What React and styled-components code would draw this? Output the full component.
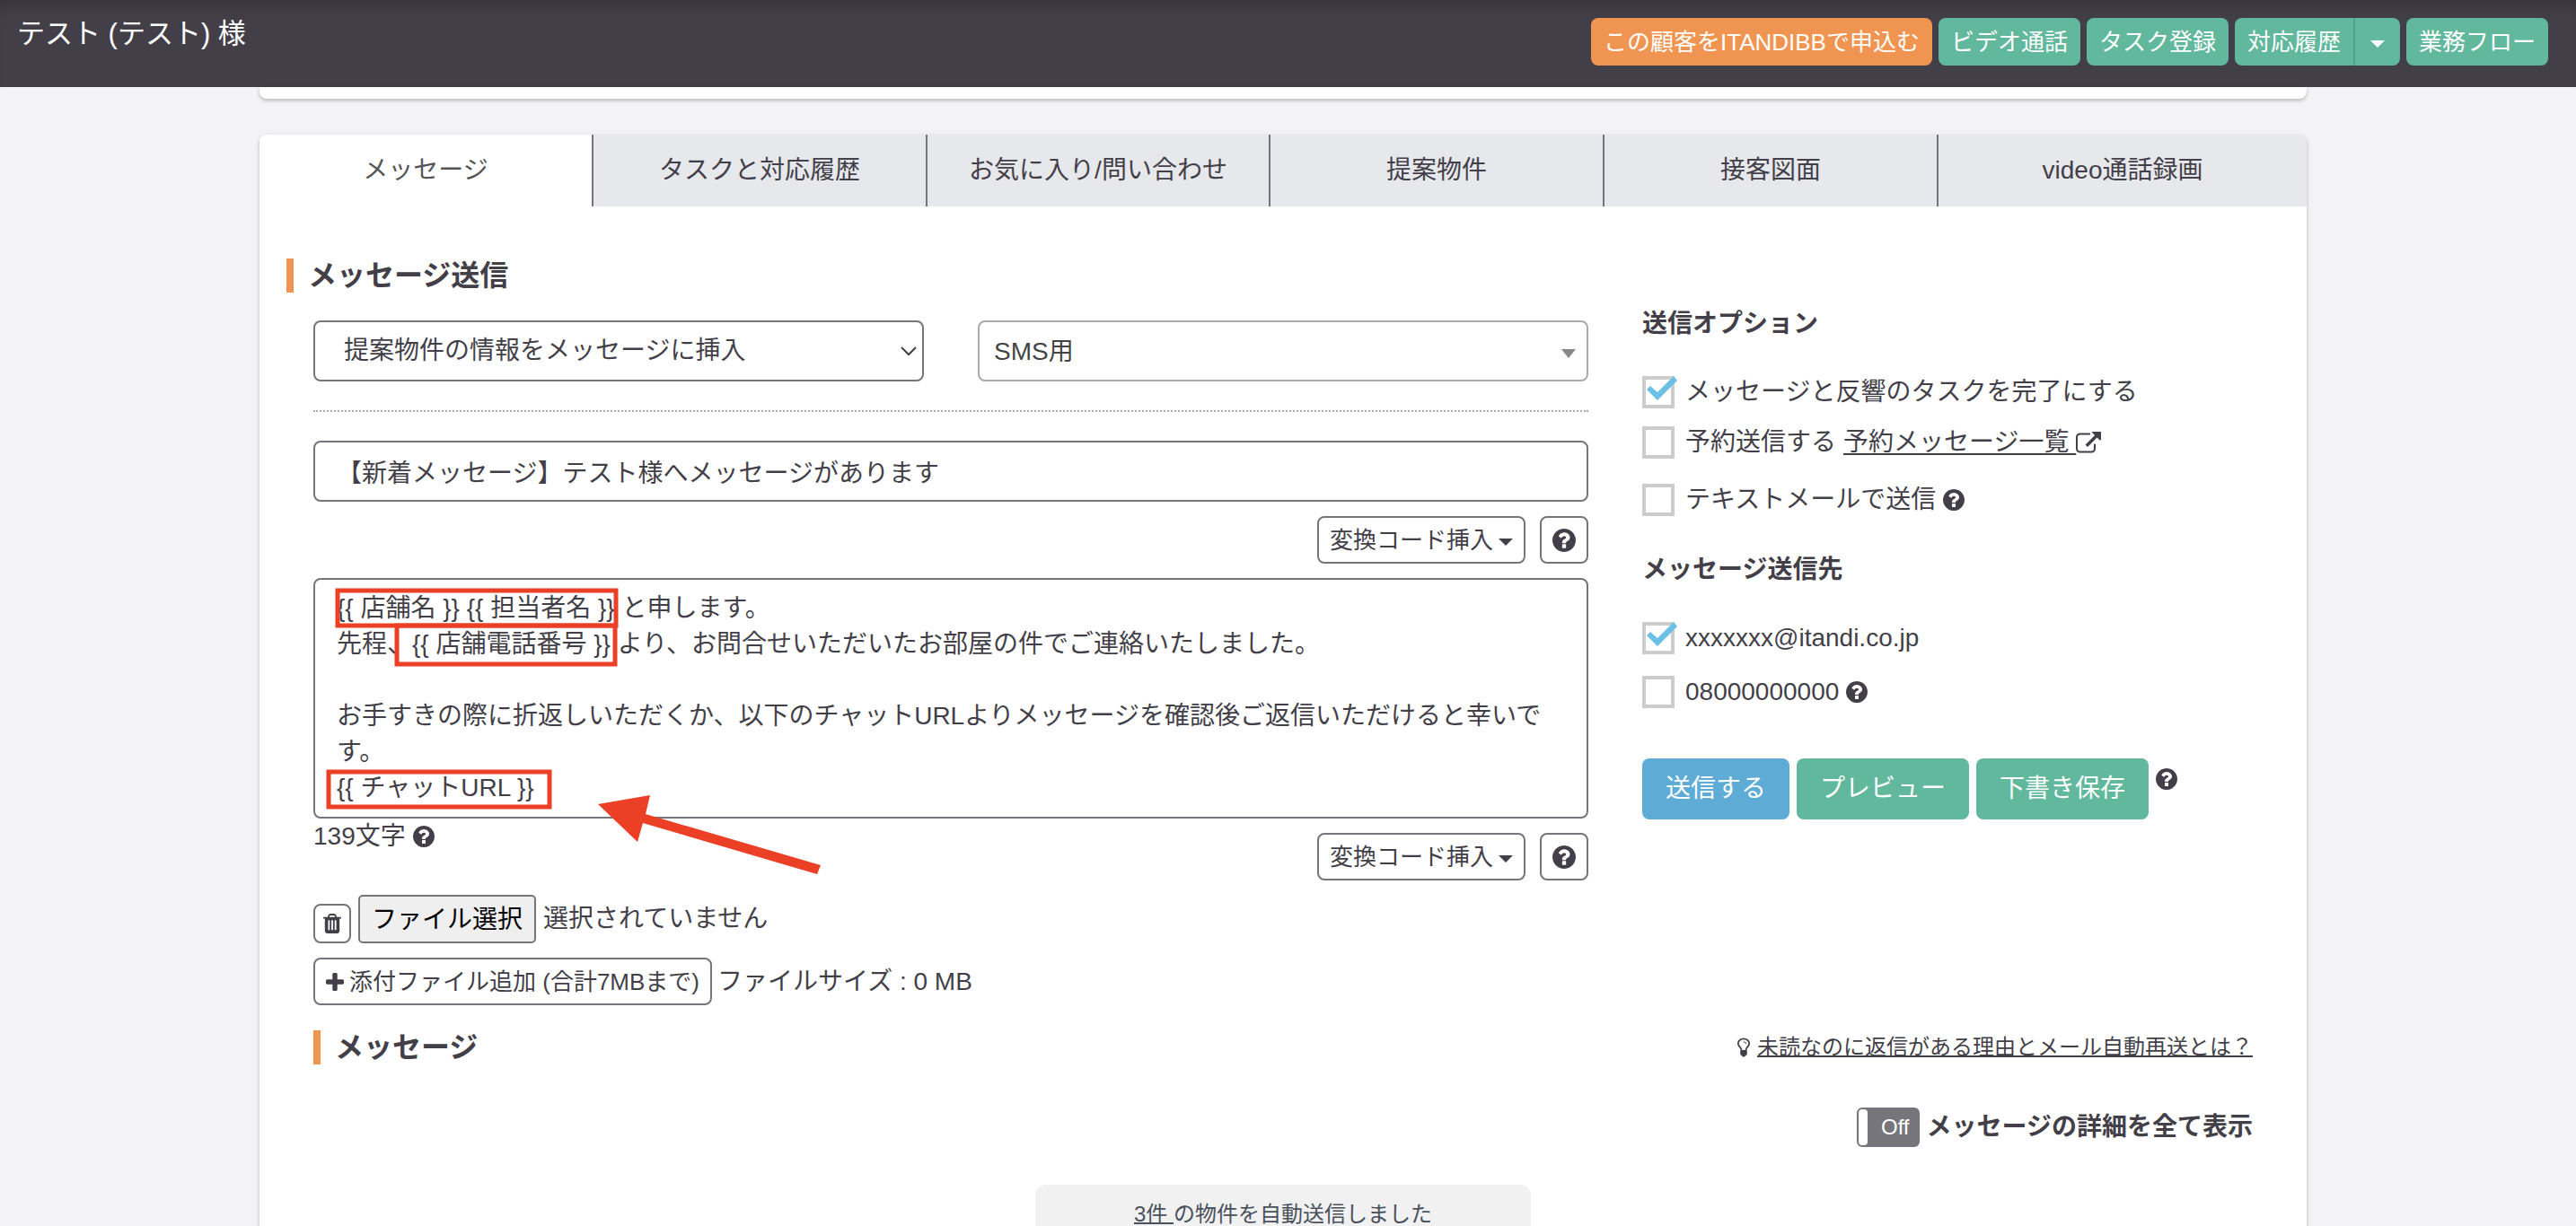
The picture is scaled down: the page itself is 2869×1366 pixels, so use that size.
import React, { useState } from 'react';
import styled, { createGlobalStyle, css } from 'styled-components';

const initialBody = `{{ 店舗名 }} {{ 担当者名 }} と申します。
先程、{{ 店舗電話番号 }} より、お問合せいただいたお部屋の件でご連絡いたしました。

お手すきの際に折返しいただくか、以下のチャットURLよりメッセージを確認後ご返信いただけると幸いです。
{{ チャットURL }}`;

const tabs = [
  'メッセージ',
  'タスクと対応履歴',
  'お気に入り/問い合わせ',
  '提案物件',
  '接客図面',
  'video通話録画',
];

const HelpIcon = ({ size = 24 }) => (
  <Icon width={size} height={size} viewBox="128 128 1536 1536" aria-hidden="true">
    <path d="M1024 1376v-192q0-14-9-23t-23-9h-192q-14 0-23 9t-9 23v192q0 14 9 23t23 9h192q14 0 23-9t9-23zm256-672q0-88-55.5-163t-138.5-116-170-41q-243 0-371 213-15 24 8 42l132 100q7 6 19 6 16 0 25-12 53-68 86-92 34-24 86-24 48 0 85.5 26t37.5 59q0 38-20 61t-68 45q-63 28-115.5 86.5t-52.5 125.5v36q0 14 9 23t23 9h192q14 0 23-9t9-23q0-19 21.5-49.5t54.5-49.5q32-18 49-28.5t46-35 44.5-48 28-60.5 12.5-81zm384 192q0 209-103 385.5t-279.5 279.5-385.5 103-385.5-103-279.5-279.5-103-385.5 103-385.5 279.5-279.5 385.5-103 385.5 103 279.5 279.5 103 385.5z" />
  </Icon>
);

const ExternalLinkIcon = () => (
  <Icon width="28" height="24" viewBox="0 32 1792 1536" aria-hidden="true">
    <path d="M1408 928v320q0 119-84.5 203.5t-203.5 84.5h-832q-119 0-203.5-84.5t-84.5-203.5v-832q0-119 84.5-203.5t203.5-84.5h704q14 0 23 9t9 23v64q0 14-9 23t-23 9h-704q-66 0-113 47t-47 113v832q0 66 47 113t113 47h832q66 0 113-47t47-113v-320q0-14 9-23t23-9h64q14 0 23 9t9 23zm384-864v512q0 26-19 45t-45 19-45-19l-176-176-652 652q-10 10-23 10t-23-10l-114-114q-10-10-10-23t10-23l652-652-176-176q-19-19-19-45t19-45 45-19h512q26 0 45 19t19 45z" />
  </Icon>
);

const TrashIcon = () => (
  <Icon width="20" height="22" viewBox="192 128 1408 1536" aria-hidden="true">
    <path d="M704 1376v-704q0-14-9-23t-23-9h-64q-14 0-23 9t-9 23v704q0 14 9 23t23 9h64q14 0 23-9t9-23zm256 0v-704q0-14-9-23t-23-9h-64q-14 0-23 9t-9 23v704q0 14 9 23t23 9h64q14 0 23-9t9-23zm256 0v-704q0-14-9-23t-23-9h-64q-14 0-23 9t-9 23v704q0 14 9 23t23 9h64q14 0 23-9t9-23zm-544-992h448l-48-117q-7-9-17-11h-317q-10 2-17 11zm928 32v64q0 14-9 23t-23 9h-96v948q0 83-47 143.5t-113 60.5h-832q-66 0-113-58.5t-47-141.5v-952h-96q-14 0-23-9t-9-23v-64q0-14 9-23t23-9h309l70-167q15-37 54-63t79-26h320q40 0 79 26t54 63l70 167h309q14 0 23 9t9 23z" />
  </Icon>
);

const PlusIcon = () => (
  <Icon width="20" height="20" viewBox="192 128 1408 1408" aria-hidden="true">
    <path d="M1600 736v192q0 40-28 68t-68 28h-416v416q0 40-28 68t-68 28h-192q-40 0-68-28t-28-68v-416h-416q-40 0-68-28t-28-68v-192q0-40 28-68t68-28h416v-416q0-40 28-68t68-28h192q40 0 68 28t28 68v416h416q40 0 68 28t28 68z" />
  </Icon>
);

const BulbIcon = () => (
  <Icon width="14" height="22" viewBox="384 128 1024 1536" aria-hidden="true">
    <path d="M1120 576q0 13-9.5 22.5t-22.5 9.5-22.5-9.5-9.5-22.5q0-46-54-71t-106-25q-13 0-22.5-9.5t-9.5-22.5 9.5-22.5 22.5-9.5q50 0 99.5 16t87 54 37.5 90zm160 0q0-72-34.5-134t-90-101.5-123-62-136.5-22.5-136.5 22.5-123 62-90 101.5-34.5 134q0 101 68 180 10 11 30.5 33t30.5 33q128 153 141 298h228q13-145 141-298 10-11 30.5-33t30.5-33q68-79 68-180zm128 0q0 155-103 268-45 49-74.5 87t-59.5 95.5-34 107.5q47 28 47 82 0 37-25 64 25 27 25 64 0 52-45 81 13 23 13 47 0 46-31.5 71t-77.5 25q-20 44-60 70t-87 26-87-26-60-70q-46 0-77.5-25t-31.5-71q0-24 13-47-45-29-45-81 0-37 25-64-25-27-25-64 0-54 47-82-4-50-34-107.5t-59.5-95.5-74.5-87q-103-113-103-268 0-99 44.5-184.5t117-142 164-89 186.5-32.5 186.5 32.5 164 89 117 142 44.5 184.5z" />
  </Icon>
);

const InsertCodeButtons = () => (
  <ButtonRow>
    <OutlineButton type="button">
      変換コード挿入
      <Caret />
    </OutlineButton>
    <OutlineButton type="button" aria-label="ヘルプ">
      <HelpIcon size={26} />
    </OutlineButton>
  </ButtonRow>
);

const CheckOption = ({ id, label, defaultChecked, tall, children }) => (
  <Option $tall={tall}>
    <CheckWrap>
      <CheckInput id={id} type="checkbox" defaultChecked={defaultChecked} />
      <CheckMark width="40" height="36" viewBox="0 0 40 36" aria-hidden="true">
        <polygon points="5,15 9,11 17,18 35,0 39,5 17,27" />
      </CheckMark>
    </CheckWrap>
    <OptionText>
      <label htmlFor={id}>{label}</label>
      {children}
    </OptionText>
  </Option>
);

const App = () => {
  const [subject, setSubject] = useState('【新着メッセージ】テスト様へメッセージがあります');
  const [body, setBody] = useState(initialBody);
  const [showDetail, setShowDetail] = useState(false);

  return (
    <>
      <GlobalStyle />
      <Page>
        <Header>
          <CustomerName>テスト (テスト) 様</CustomerName>
          <HeaderActions>
            <SolidButton type="button" $color="#f09551">この顧客をITANDIBBで申込む</SolidButton>
            <SolidButton type="button">ビデオ通話</SolidButton>
            <SolidButton type="button">タスク登録</SolidButton>
            <ButtonGroup>
              <SolidButton type="button">対応履歴</SolidButton>
              <DropdownToggle type="button" aria-label="対応履歴メニュー">
                <Caret />
              </DropdownToggle>
            </ButtonGroup>
            <SolidButton type="button">業務フロー</SolidButton>
          </HeaderActions>
        </Header>

        <Main>
          <Container>
            <PreviousCard />
            <Card>
              <Tabs role="tablist">
                {tabs.map((tab, i) => (
                  <Tab key={tab} type="button" role="tab" aria-selected={i === 0} $active={i === 0}>
                    {tab}
                  </Tab>
                ))}
              </Tabs>

              <CardBody>
                <SectionTitle $outdent>メッセージ送信</SectionTitle>
                <Columns>
                  <Form>
                    <SelectRow>
                      <SelectWrap>
                        <Select aria-label="提案物件の挿入">
                          <option>提案物件の情報をメッセージに挿入</option>
                        </Select>
                        <Chevron width="18" height="11" viewBox="0 0 18 11" aria-hidden="true">
                          <path d="M1 1l8 8 8-8" />
                        </Chevron>
                      </SelectWrap>
                      <SelectWrap>
                        <Select aria-label="テンプレート" $template>
                          <option>SMS用</option>
                        </Select>
                        <SelectArrow />
                      </SelectWrap>
                    </SelectRow>
                    <Divider />
                    <SubjectInput
                      type="text"
                      aria-label="件名"
                      value={subject}
                      onChange={e => setSubject(e.target.value)}
                    />
                    <InsertRow>
                      <InsertCodeButtons />
                    </InsertRow>
                    <BodyWrap>
                      <BodyInput
                        aria-label="本文"
                        rows={6}
                        spellCheck={false}
                        value={body}
                        onChange={e => setBody(e.target.value)}
                      />
                      <Marks width="600" height="340" viewBox="0 0 600 340" aria-hidden="true">
                        <rect x="27" y="14" width="310" height="39" />
                        <rect x="93" y="53" width="243" height="43" />
                        <rect x="17" y="216" width="246" height="39" />
                        <polygon points="317,252 375,242 370,263 565,320 561,330 367,273 361,294" />
                      </Marks>
                    </BodyWrap>
                    <CountRow>
                      <CharCount>
                        139文字 <HelpIcon />
                      </CharCount>
                      <InsertCodeSlot>
                        <InsertCodeButtons />
                      </InsertCodeSlot>
                    </CountRow>
                    <FileRow>
                      <TrashButton type="button" aria-label="削除">
                        <TrashIcon />
                      </TrashButton>
                      <FileInput id="attachment" type="file" />
                      <FileLabel htmlFor="attachment">ファイル選択</FileLabel>
                      <FileStatus>選択されていません</FileStatus>
                    </FileRow>
                    <AttachRow>
                      <OutlineButton type="button">
                        <PlusIcon />
                        添付ファイル追加 (合計7MBまで)
                      </OutlineButton>
                      <span>ファイルサイズ : 0 MB</span>
                    </AttachRow>
                  </Form>

                  <Side>
                    <SideTitle>送信オプション</SideTitle>
                    <Options>
                      <CheckOption id="complete" label="メッセージと反響のタスクを完了にする" defaultChecked />
                      <CheckOption id="reserve" label="予約送信する" tall>
                        <OptionLink href="#reserved">
                          <u>予約メッセージ一覧&nbsp;</u>
                          <ExternalLinkIcon />
                        </OptionLink>
                      </CheckOption>
                      <CheckOption id="text-mail" label="テキストメールで送信">
                        <HelpIcon />
                      </CheckOption>
                    </Options>
                    <SideTitle>メッセージ送信先</SideTitle>
                    <Options $wide>
                      <CheckOption id="email" label="xxxxxxx@itandi.co.jp" defaultChecked />
                      <CheckOption id="phone" label="08000000000">
                        <HelpIcon />
                      </CheckOption>
                    </Options>
                    <SendRow>
                      <SolidButton type="button" $large $color="#5eabd6">送信する</SolidButton>
                      <SolidButton type="button" $large>プレビュー</SolidButton>
                      <SolidButton type="button" $large>下書き保存</SolidButton>
                      <SendHelp>
                        <HelpIcon />
                      </SendHelp>
                    </SendRow>
                  </Side>
                </Columns>

                <HistoryHeader>
                  <SectionTitle>メッセージ</SectionTitle>
                  <HintLink href="#help">
                    <BulbIcon />
                    <u>未読なのに返信がある理由とメール自動再送とは？</u>
                  </HintLink>
                </HistoryHeader>
                <DetailRow>
                  <Toggle
                    id="detail-toggle"
                    type="button"
                    role="switch"
                    aria-checked={showDetail}
                    onClick={() => setShowDetail(!showDetail)}
                  >
                    <Knob />
                    <ToggleText>{showDetail ? 'On' : 'Off'}</ToggleText>
                  </Toggle>
                  <DetailLabel htmlFor="detail-toggle">メッセージの詳細を全て表示</DetailLabel>
                </DetailRow>
                <Notice>
                  <a href="#properties">3件&nbsp;</a>の物件を自動送信しました
                </Notice>
              </CardBody>
            </Card>
          </Container>
        </Main>
      </Page>
    </>
  );
};

const GlobalStyle = createGlobalStyle`
  * {
    box-sizing: border-box;
  }

  body {
    margin: 0;
    background: #f3f3f6;
    color: #433f49;
    font-family: 'Liberation Sans', 'Noto Sans CJK JP', sans-serif;
    font-size: 28px;
    line-height: 40px;
  }

  button, input, select, textarea {
    font: inherit;
    color: inherit;
  }

  button, select, label {
    cursor: pointer;
  }

  a {
    color: inherit;
  }

  u, a {
    text-decoration-thickness: 2px;
  }
`;

const Page = styled.div`
  display: flex;
  flex-direction: column;
  height: 100vh;
  overflow: hidden;
`;

const Icon = styled.svg`
  display: block;
  flex: none;
  fill: currentColor;
`;

const Caret = styled.span`
  border: 8px solid transparent;
  border-top-color: currentColor;
  border-bottom: 0;
  margin-top: 4px;
`;

const Header = styled.header`
  display: flex;
  justify-content: space-between;
  align-items: flex-start;
  flex: none;
  padding: 20px 31px 24px 19px;
  background: #433f49;
  box-shadow: inset 0 20px 20px -16px rgba(0, 0, 0, 0.25);
  color: #fff;
`;

const CustomerName = styled.h1`
  margin: 0;
  font-size: 31px;
  font-weight: 400;
  line-height: 36px;
`;

const HeaderActions = styled.div`
  display: flex;
  gap: 7px;
`;

const SolidButton = styled.button`
  height: 53px;
  padding: 0 14px;
  border: 0;
  border-radius: 8px;
  background: ${({ $color }) => $color || '#61b89c'};
  color: #fff;
  font-size: 26px;
  line-height: 40px;
  white-space: nowrap;

  ${({ $large }) => $large && css`
    height: 68px;
    padding: 0 26px;
    font-size: 28px;
  `}
`;

const ButtonGroup = styled.div`
  display: flex;

  & > :first-child {
    border-radius: 8px 0 0 8px;
  }
`;

const DropdownToggle = styled(SolidButton)`
  display: flex;
  align-items: center;
  padding: 0 17px;
  border-left: 2px solid #52a289;
  border-radius: 0 8px 8px 0;
`;

const Main = styled.main`
  padding-right: 11px;
`;

const Container = styled.div`
  display: flex;
  flex-direction: column;
  gap: 40px;
  max-width: 2280px;
  margin: 0 auto;
`;

const PreviousCard = styled.div`
  flex: none;
  height: 13px;
  border-radius: 0 0 8px 8px;
  background: #fff;
  box-shadow: 0 2px 4px rgba(0, 0, 0, 0.25);
`;

const Card = styled.section`
  border-radius: 8px;
  background: #fff;
  box-shadow: 0 2px 4px rgba(0, 0, 0, 0.25);
`;

const Tabs = styled.div`
  display: grid;
  grid-template-columns: 370fr 372fr 382fr 372fr 372fr 412fr;
  overflow: hidden;
  border-radius: 8px 8px 0 0;
`;

const Tab = styled.button`
  height: 80px;
  padding: 0;
  border: 0;
  background: ${({ $active }) => ($active ? '#fff' : '#e7e8ec')};
  color: ${({ $active }) => ($active ? '#555' : '#433f49')};

  & + & {
    border-left: 2px solid #77757c;
  }
`;

const CardBody = styled.div`
  padding: 58px 60px 60px;
`;

const SectionTitle = styled.h2`
  margin: 0 0 0 ${({ $outdent }) => ($outdent ? '-30px' : '0')};
  padding-left: 16px;
  border-left: 8px solid #f09551;
  font-size: 32px;
  font-weight: 700;
  line-height: 38px;
`;

const Columns = styled.div`
  display: grid;
  grid-template-columns: 1420fr 680fr;
  gap: 60px;
`;

const Form = styled.div`
  min-width: 0;
  padding-top: 31px;
`;

const SelectRow = styled.div`
  display: grid;
  grid-template-columns: 1fr 1fr;
  gap: 60px;
`;

const SelectWrap = styled.div`
  position: relative;
`;

const fieldStyle = css`
  display: block;
  width: 100%;
  border: 2px solid #77757c;
  border-radius: 8px;
  background: #fff;
`;

const Select = styled.select`
  ${fieldStyle}
  height: 68px;
  padding: 0 32px;
  appearance: none;

  ${({ $template }) => $template && css`
    padding: 2px 16px 0;
    border-color: #aaa;
    color: #444;
  `}
`;

const Chevron = styled.svg`
  position: absolute;
  top: 29px;
  right: 8px;
  fill: none;
  stroke: #433f49;
  stroke-width: 2;
  pointer-events: none;
`;

const SelectArrow = styled.span`
  position: absolute;
  top: 32px;
  right: 14px;
  border: 8px solid transparent;
  border-top: 10px solid #888;
  border-bottom: 0;
  pointer-events: none;
`;

const Divider = styled.hr`
  margin: 32px 0;
  border: 0;
  border-top: 2px dotted #aaa;
`;

const SubjectInput = styled.input`
  ${fieldStyle}
  height: 68px;
  padding: 0 24px;
`;

const InsertRow = styled.div`
  display: flex;
  justify-content: flex-end;
  padding: 16px 0;
`;

const ButtonRow = styled.div`
  display: flex;
  gap: 16px;
`;

const OutlineButton = styled.button`
  display: flex;
  align-items: center;
  gap: 6px;
  height: 53px;
  padding: 0 12px;
  border: 2px solid #77757c;
  border-radius: 8px;
  background: #fff;
  font-size: 26px;
  white-space: nowrap;
`;

const BodyWrap = styled.div`
  position: relative;
`;

const BodyInput = styled.textarea`
  ${fieldStyle}
  padding: 12px 24px;
  line-height: 40px;
  overflow: hidden;
  resize: none;
`;

const Marks = styled.svg`
  position: absolute;
  top: 0;
  left: 0;
  pointer-events: none;

  rect {
    fill: none;
    stroke: #eb4026;
    stroke-width: 5;
  }

  polygon {
    fill: #eb4026;
  }
`;

const CountRow = styled.div`
  display: flex;
  justify-content: space-between;
  align-items: flex-start;
`;

const CharCount = styled.div`
  display: flex;
  align-items: center;
  gap: 8px;
`;

const InsertCodeSlot = styled.div`
  padding-top: 16px;
`;

const FileRow = styled.div`
  display: flex;
  align-items: flex-end;
  gap: 8px;
  margin-top: 16px;
`;

const TrashButton = styled(OutlineButton)`
  height: 44px;
  padding: 0 9px;
`;

const FileInput = styled.input`
  position: absolute;
  width: 1px;
  height: 1px;
  opacity: 0;
`;

const FileLabel = styled.label`
  padding: 6px 13px 4px;
  border: 2px solid #767676;
  border-radius: 5px;
  background: #efefef;
  color: #000;
`;

const FileStatus = styled.span`
  align-self: center;
`;

const AttachRow = styled.div`
  display: flex;
  align-items: center;
  gap: 6px;
  margin-top: 16px;
`;

const Side = styled.div`
  padding-top: 15px;
`;

const SideTitle = styled.h3`
  margin: 0 0 38px;
  font-size: 28px;
  font-weight: 700;
  line-height: 40px;
`;

const Options = styled.div`
  display: flex;
  flex-direction: column;
  gap: ${({ $wide }) => ($wide ? '24px' : '20px')};
  margin-bottom: 40px;
`;

const Option = styled.div`
  display: flex;
  align-items: flex-start;
  gap: 12px;
  height: ${({ $tall }) => ($tall ? '44px' : '36px')};
`;

const CheckWrap = styled.span`
  position: relative;
  flex: none;
  height: 36px;
`;

const CheckMark = styled.svg`
  position: absolute;
  top: 0;
  left: 0;
  display: none;
  fill: #6cc0e5;
  pointer-events: none;
`;

const CheckInput = styled.input`
  display: block;
  width: 36px;
  height: 36px;
  margin: 0;
  border: 4px solid #ccc;
  background: #fff;
  appearance: none;

  &:checked + ${CheckMark} {
    display: block;
  }
`;

const OptionText = styled.div`
  display: flex;
  align-items: center;
  gap: 8px;
  line-height: 36px;
`;

const OptionLink = styled.a`
  display: flex;
  align-items: center;
  text-decoration: none;

  u {
    text-underline-offset: 3px;
  }
`;

const SendRow = styled.div`
  display: flex;
  gap: 8px;
  padding-top: 16px;
`;

const SendHelp = styled.span`
  padding-top: 11px;
`;

const HistoryHeader = styled.div`
  display: flex;
  justify-content: space-between;
  align-items: center;
  margin-top: 28px;
`;

const HintLink = styled.a`
  display: flex;
  align-items: center;
  gap: 8px;
  font-size: 24px;
  line-height: 36px;
  text-decoration: none;
`;

const DetailRow = styled.div`
  display: flex;
  justify-content: flex-end;
  align-items: center;
  gap: 8px;
  margin-top: 48px;
`;

const Toggle = styled.button`
  display: flex;
  justify-content: space-between;
  width: 70px;
  height: 44px;
  padding: 0;
  border: 2px solid #77757c;
  border-radius: 6px;
  background: #77757c;
  color: #fff;
  font-size: 24px;
  line-height: 40px;
`;

const Knob = styled.span`
  width: 10px;
  height: 40px;
  border-radius: 4px;
  background: #fff;
`;

const ToggleText = styled.span`
  padding-right: 9px;
`;

const DetailLabel = styled.label`
  font-weight: 700;
`;

const Notice = styled.div`
  width: 552px;
  margin: 42px auto 0;
  padding: 16px;
  border-radius: 12px;
  background: #f1f1f1;
  color: #4a505c;
  font-size: 24px;
  line-height: 34px;
  text-align: center;
`;

export default App;
